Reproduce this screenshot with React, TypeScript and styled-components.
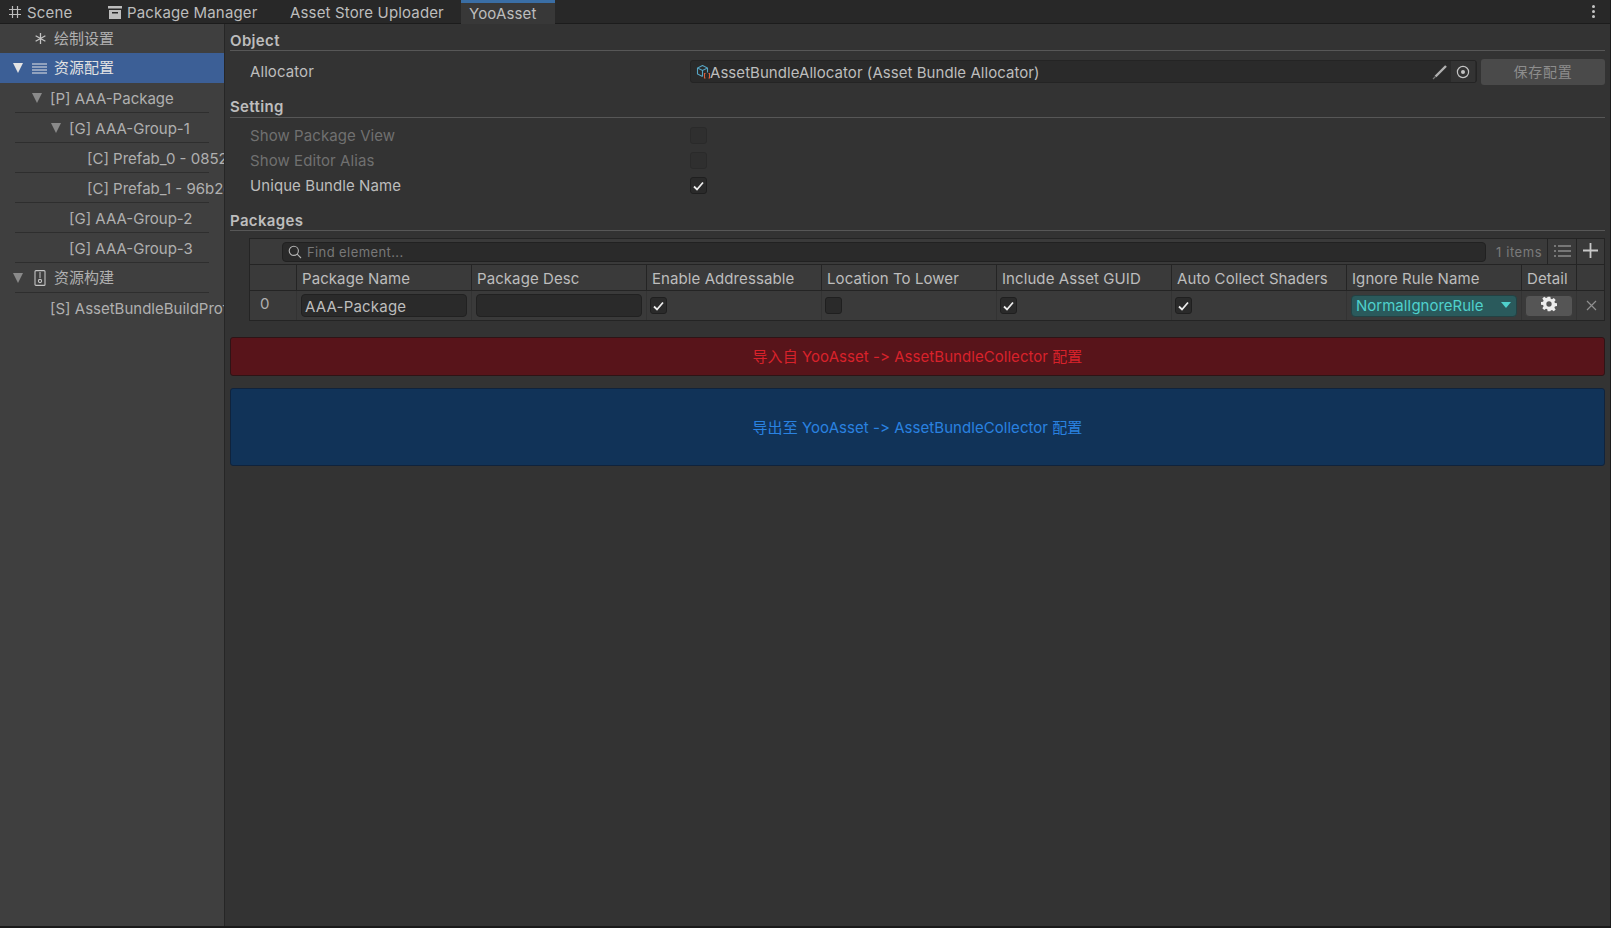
import * as React from 'react';
import styled, { createGlobalStyle } from 'styled-components';

const Global = createGlobalStyle`
  html, body { margin: 0; padding: 0; background: #333333; }
  body { font-family: Inter, "Noto Sans CJK SC", sans-serif; font-size: 15px; color: #bdbdbd; }
  * { box-sizing: border-box; }
`;

const Window = styled.div`
  width: 1611px;
  height: 928px;
  display: flex;
  flex-direction: column;
  overflow: hidden;
  border-right: 1px solid #1c1c1c;
  border-bottom: 2px solid #1a1a1a;
`;

const TabBar = styled.div`
  height: 24px;
  flex: none;
  display: flex;
  align-items: stretch;
  background: #282828;
  border-bottom: 1px solid #1c1c1c;
`;

const Tab = styled.div<{ $w: number; $active?: boolean }>`
  width: ${(p) => p.$w}px;
  flex: none;
  display: flex;
  align-items: center;
  gap: 5px;
  padding-left: 8px;
  margin-bottom: -1px;
  font-size: 15px;
  letter-spacing: 0.15px;
  color: #bdbdbd;
  background: ${(p) => (p.$active ? '#383838' : 'transparent')};
  border-top: ${(p) => (p.$active ? '3px solid #3a6ea5' : '0')};
`;

const TabSpacer = styled.div`
  flex: 1;
`;

const MoreDots = styled.div`
  width: 24px;
  padding-top: 5px;
  display: flex;
  flex-direction: column;
  align-items: center;
  gap: 2px;
  margin-right: 5px;
  span {
    width: 3px;
    height: 3px;
    border-radius: 50%;
    background: #c4c4c4;
  }
`;

const Body = styled.div`
  flex: 1;
  display: flex;
  min-height: 0;
`;

const Sidebar = styled.div`
  width: 225px;
  flex: none;
  background: #3f3f3f;
  border-right: 1px solid #262626;
  overflow: hidden;
`;

const TreeRow = styled.div<{ $h?: number; $selected?: boolean; $line?: boolean }>`
  position: relative;
  height: ${(p) => p.$h ?? 30}px;
  display: flex;
  align-items: center;
  white-space: nowrap;
  overflow: hidden;
  font-size: 15px;
  letter-spacing: 0;
  color: ${(p) => (p.$selected ? '#e2e2e2' : '#b0b0b0')};
  background: ${(p) => (p.$selected ? '#3c5f96' : 'transparent')};
  ${(p) =>
    p.$line
      ? `&::after { content: ''; position: absolute; left: 15px; right: 15px; bottom: 0; height: 1px; background: #2e2e2e; }`
      : ''}
`;

const Arrow = styled.span<{ $x: number; $light?: boolean }>`
  flex: none;
  margin-left: ${(p) => p.$x}px;
  width: 0;
  height: 0;
  margin-top: -1px;
  border-left: 5px solid transparent;
  border-right: 5px solid transparent;
  border-top: 10px solid ${(p) => (p.$light ? '#e4e4e4' : '#8a8a8a')};
`;

const TreeIcon = styled.span<{ $x: number }>`
  flex: none;
  margin-left: ${(p) => p.$x}px;
  width: 15px;
  height: 16px;
  display: flex;
  align-items: center;
  justify-content: center;
`;

const TreeLabel = styled.span<{ $x: number; $cjk?: boolean }>`
  margin-left: ${(p) => p.$x}px;
  margin-top: ${(p) => (p.$cjk ? -3 : 0)}px;
`;

const Main = styled.div`
  flex: 1;
  min-width: 0;
  background: #333333;
  padding: 0 5px 0 5px;
`;

const SectionTitle = styled.div<{ $h: number; $lift?: number }>`
  height: ${(p) => p.$h}px;
  display: flex;
  align-items: flex-end;
  padding-bottom: ${(p) => p.$lift ?? 0}px;
  font-size: 15px;
  font-weight: 600;
  letter-spacing: 0.35px;
  line-height: 18px;
  color: #bdbdbd;
  border-bottom: 1px solid #575757;
`;

const AllocatorRow = styled.div`
  height: 40px;
  padding-top: 8px;
  display: flex;
  align-items: flex-start;
`;

const RowLabel = styled.div<{ $dim?: boolean; $nudge?: boolean }>`
  width: 460px;
  flex: none;
  padding-left: 20px;
  padding-top: ${(p) => (p.$nudge ? 1 : 0)}px;
  color: ${(p) => (p.$dim ? '#707070' : '#bdbdbd')};
  font-size: 15px;
  letter-spacing: 0.08px;
  line-height: 24px;
`;

const ObjectField = styled.div`
  flex: 1;
  margin-top: 1px;
  height: 23px;
  display: flex;
  align-items: center;
  padding-left: 5px;
  background: #2a2a2a;
  border: 1px solid #242424;
  border-radius: 3px;
  font-size: 15px;
  letter-spacing: 0.05px;
  color: #bdbdbd;
`;

const FieldText = styled.span`
  padding-top: 1px;
  margin-left: -1px;
`;

const FieldSpacer = styled.div`
  flex: 1;
`;

const PenIcon = styled.span`
  display: flex;
  margin-right: 3px;
`;

const PickerButton = styled.span`
  width: 24px;
  height: 21px;
  display: flex;
  align-items: center;
  justify-content: center;
  background: #333333;
  margin-right: 1px;
`;

const SaveButton = styled.div`
  width: 124px;
  height: 26px;
  margin-left: 4px;
  padding-bottom: 2px;
  display: flex;
  align-items: center;
  justify-content: center;
  background: #4a4a4a;
  border-radius: 3px;
  color: #8d8d8d;
  font-size: 14px;
  letter-spacing: 0.8px;
`;

const ToggleRow = styled.div<{ $top?: number }>`
  height: 25px;
  margin-top: ${(p) => p.$top ?? 0}px;
  display: flex;
  align-items: center;
`;

const Check = styled.span<{ $dim?: boolean }>`
  width: 17px;
  height: 17px;
  flex: none;
  display: flex;
  align-items: center;
  justify-content: center;
  border-radius: 3px;
  background: ${(p) => (p.$dim ? '#2f2f2f' : '#2a2a2a')};
  border: 1px solid ${(p) => (p.$dim ? '#2a2a2a' : '#1f1f1f')};
`;

const ListBox = styled.div`
  margin: 7px 0 0 19px;
  border-left: 1px solid #242424;
  border-top: 1px solid #242424;
  border-right: 1px solid #242424;
`;

const ListToolbar = styled.div`
  height: 26px;
  display: flex;
  align-items: stretch;
  background: #3a3a3a;
  border-bottom: 1px solid #242424;
`;

const SearchBox = styled.div`
  width: 1204px;
  height: 20px;
  margin: 3px 0 0 32px;
  display: flex;
  align-items: center;
  gap: 5px;
  padding-left: 5px;
  background: #2a2a2a;
  border: 1px solid #212121;
  border-radius: 4px;
  font-size: 13px;
  letter-spacing: 0.4px;
  color: #787878;
`;

const ItemCount = styled.div`
  width: 61px;
  flex: none;
  padding: 1px 0 0 10px;
  display: flex;
  align-items: center;
  font-size: 13px;
  letter-spacing: 0.6px;
  color: #7a7a7a;
  white-space: nowrap;
`;

const ToolButton = styled.div<{ $w: number }>`
  width: ${(p) => p.$w}px;
  flex: none;
  display: flex;
  align-items: center;
  justify-content: center;
  margin-bottom: -1px;
  padding-bottom: 2px;
  border-left: 1px solid #242424;
  border-bottom: 1px solid transparent;
`;

const GridRow = styled.div<{ $h: number }>`
  height: ${(p) => p.$h}px;
  display: grid;
  grid-template-columns: 47px repeat(7, 175px) 55px 1fr;
  background: #3a3a3a;
  border-bottom: 1px solid #242424;
`;

const HeadCell = styled.div`
  display: flex;
  align-items: center;
  padding: 2px 0 0 5px;
  font-size: 15px;
  letter-spacing: 0.08px;
  color: #bdbdbd;
  white-space: nowrap;
  border-right: 1px solid #242424;
`;

const Cell = styled.div<{ $pad?: number }>`
  display: flex;
  align-items: center;
  padding: 0 ${(p) => p.$pad ?? 4}px;
  border-right: 1px solid #333333;
`;

const IndexCell = styled(Cell)`
  padding: 0 0 4px 10px;
  font-size: 15px;
  color: #b0b0b0;
`;

const TextInput = styled.div`
  width: 100%;
  height: 23px;
  padding: 2px 0 0 3px;
  display: flex;
  align-items: center;
  background: #2a2a2a;
  border: 1px solid #212121;
  border-radius: 4px;
  font-size: 15px;
  letter-spacing: 0.2px;
  color: #bdbdbd;
`;

const RuleSelect = styled.div`
  width: 100%;
  height: 22px;
  padding: 0 5px 1px 4px;
  display: flex;
  align-items: center;
  justify-content: space-between;
  background: #2a5a5c;
  border: 1px solid #234143;
  border-radius: 4px;
  font-size: 15px;
  color: #4fd1cc;
`;

const SelectArrow = styled.span`
  width: 0;
  height: 0;
  border-left: 5px solid transparent;
  border-right: 5px solid transparent;
  border-top: 6px solid #4fd1cc;
`;

const GearButton = styled.div`
  width: 100%;
  height: 22px;
  padding-bottom: 3px;
  display: flex;
  align-items: center;
  justify-content: center;
  background: #555555;
  border: 1px solid #3a3a3a;
  border-radius: 4px;
`;

const RemoveCell = styled.div`
  display: flex;
  align-items: center;
  justify-content: center;
  padding-left: 2px;
`;

const ActionButton = styled.div<{ $h: number; $top: number; $bg: string; $fg: string; $edge: string }>`
  height: ${(p) => p.$h}px;
  margin-top: ${(p) => p.$top}px;
  padding-bottom: 2px;
  display: flex;
  align-items: center;
  justify-content: center;
  background: ${(p) => p.$bg};
  color: ${(p) => p.$fg};
  border: 1px solid ${(p) => p.$edge};
  border-radius: 3px;
  font-size: 15px;
  letter-spacing: 0.05px;
`;

const CheckMark = () => (
  <svg width="11" height="10" viewBox="0 0 11 10">
    <path d="M1 5.5 L4 8.5 L10 1.5" fill="none" stroke="#ececec" strokeWidth="1.8" />
  </svg>
);

const columns = [
  'Package Name',
  'Package Desc',
  'Enable Addressable',
  'Location To Lower',
  'Include Asset GUID',
  'Auto Collect Shaders',
  'Ignore Rule Name',
  'Detail',
];

export default function App() {
  return (
    <Window>
      <Global />
      <TabBar>
        <Tab $w={100}>
          <svg width="14" height="14" viewBox="0 0 14 14" stroke="#bdbdbd" strokeWidth="1.2" fill="none">
            <path d="M4.5 1v12M9.5 1v12M1 4.5h12M1 9.5h12" />
          </svg>
          Scene
        </Tab>
        <Tab $w={182}>
          <svg width="14" height="13" viewBox="0 0 14 13" fill="#bdbdbd">
            <path d="M0 0h14v2.5H0zM1 4h12v9H1zM4 6v1.5h6V6z" fillRule="evenodd" />
          </svg>
          Package Manager
        </Tab>
        <Tab $w={179}>Asset Store Uploader</Tab>
        <Tab $w={94} $active>YooAsset</Tab>
        <TabSpacer />
        <MoreDots><span /><span /><span /></MoreDots>
      </TabBar>
      <Body>
        <Sidebar>
          <TreeRow $h={29}>
            <TreeIcon $x={33}>
              <svg width="13" height="13" viewBox="0 0 12 12" stroke="#c4c4c4" strokeWidth="1.2" fill="none">
                <path d="M6 1v10M1.5 3.5l9 5M10.5 3.5l-9 5" />
              </svg>
            </TreeIcon>
            <TreeLabel $x={6} $cjk>绘制设置</TreeLabel>
          </TreeRow>
          <TreeRow $selected>
            <Arrow $x={13} $light />
            <TreeIcon $x={9}>
              <svg width="15" height="11" viewBox="0 0 15 11" stroke="#e6e6e6" strokeWidth="1.2">
                <path d="M0 1h15M0 4h15M0 7h15M0 10h15" />
              </svg>
            </TreeIcon>
            <TreeLabel $x={7} $cjk>资源配置</TreeLabel>
          </TreeRow>
          <TreeRow $line>
            <Arrow $x={32} />
            <TreeLabel $x={8}>[P] AAA-Package</TreeLabel>
          </TreeRow>
          <TreeRow $line>
            <Arrow $x={51} />
            <TreeLabel $x={8}>[G] AAA-Group-1</TreeLabel>
          </TreeRow>
          <TreeRow $line><TreeLabel $x={87}>[C] Prefab_0 - 0852f1</TreeLabel></TreeRow>
          <TreeRow $line><TreeLabel $x={87}>[C] Prefab_1 - 96b2c4</TreeLabel></TreeRow>
          <TreeRow $line><TreeLabel $x={69}>[G] AAA-Group-2</TreeLabel></TreeRow>
          <TreeRow $line><TreeLabel $x={69}>[G] AAA-Group-3</TreeLabel></TreeRow>
          <TreeRow $line>
            <Arrow $x={13} />
            <TreeIcon $x={9}>
              <svg width="12" height="16" viewBox="0 0 12 16" stroke="#c4c4c4" strokeWidth="1.1" fill="none">
                <rect x="1" y="0.6" width="10" height="14.8" rx="1" />
                <path d="M5 3h2M5 5h2M5 7h2" />
                <circle cx="6" cy="11" r="1.6" />
              </svg>
            </TreeIcon>
            <TreeLabel $x={7} $cjk>资源构建</TreeLabel>
          </TreeRow>
          <TreeRow><TreeLabel $x={50}>[S] AssetBundleBuildProfile</TreeLabel></TreeRow>
        </Sidebar>
        <Main>
          <SectionTitle $h={27}>Object</SectionTitle>
          <AllocatorRow>
            <RowLabel $nudge>Allocator</RowLabel>
            <ObjectField>
              <svg width="15" height="15" viewBox="0 0 15 15" fill="none">
                <path d="M6.5 1.5l5 2.5v4.5M6.5 1.5l-5 2.5v6l5 2.5M1.5 4l5 2.5 5-2.5M6.5 6.5v6" stroke="#56a5c4" strokeWidth="1.1" />
                <path d="M9.5 9.5h-1v4.5h1M12.5 9.5h1v4.5h-1" stroke="#d9603a" strokeWidth="1.1" />
              </svg>
              <FieldText>AssetBundleAllocator (Asset Bundle Allocator)</FieldText>
              <FieldSpacer />
              <PenIcon>
                <svg width="16" height="16" viewBox="0 0 16 16" fill="none">
                  <path d="M3.5 12.5 L14 2" stroke="#b0b0b0" strokeWidth="2.4" />
                  <path d="M1 15 L3.5 12.5" stroke="#777" strokeWidth="1.2" />
                </svg>
              </PenIcon>
              <PickerButton>
                <svg width="14" height="14" viewBox="0 0 14 14" fill="none">
                  <circle cx="7" cy="7" r="5.6" stroke="#c4c4c4" strokeWidth="1.2" />
                  <circle cx="7" cy="7" r="2" fill="#c4c4c4" />
                </svg>
              </PickerButton>
            </ObjectField>
            <SaveButton>保存配置</SaveButton>
          </AllocatorRow>
          <SectionTitle $h={27} $lift={1}>Setting</SectionTitle>
          <ToggleRow $top={5}>
            <RowLabel $dim>Show Package View</RowLabel>
            <Check $dim />
          </ToggleRow>
          <ToggleRow>
            <RowLabel $dim>Show Editor Alias</RowLabel>
            <Check $dim />
          </ToggleRow>
          <ToggleRow>
            <RowLabel>Unique Bundle Name</RowLabel>
            <Check><CheckMark /></Check>
          </ToggleRow>
          <SectionTitle $h={33}>Packages</SectionTitle>
          <ListBox>
            <ListToolbar>
              <SearchBox>
                <svg width="14" height="14" viewBox="0 0 14 14" fill="none" stroke="#b4b4b4" strokeWidth="1.1">
                  <circle cx="5.8" cy="5.8" r="4.6" />
                  <path d="M9.2 9.2 L13 13" />
                </svg>
                Find element...
              </SearchBox>
              <ItemCount>1 items</ItemCount>
              <ToolButton $w={29}>
                <svg width="17" height="12" viewBox="0 0 17 12" stroke="#b4b4b4" strokeWidth="1.2">
                  <path d="M4 1h13M4 6h13M4 11h13M0 1h2M0 6h2M0 11h2" />
                </svg>
              </ToolButton>
              <ToolButton $w={28}>
                <svg width="15" height="15" viewBox="0 0 15 15" stroke="#c8c8c8" strokeWidth="1.8">
                  <path d="M7.5 0v15M0 7.5h15" />
                </svg>
              </ToolButton>
            </ListToolbar>
            <GridRow $h={26}>
              <HeadCell />
              {columns.map((c) => <HeadCell key={c}>{c}</HeadCell>)}
              <div />
            </GridRow>
            <GridRow $h={30}>
              <IndexCell>0</IndexCell>
              <Cell><TextInput>AAA-Package</TextInput></Cell>
              <Cell><TextInput /></Cell>
              <Cell $pad={3}><Check><CheckMark /></Check></Cell>
              <Cell $pad={3}><Check /></Cell>
              <Cell $pad={3}><Check><CheckMark /></Check></Cell>
              <Cell $pad={3}><Check><CheckMark /></Check></Cell>
              <Cell>
                <RuleSelect>NormalIgnoreRule<SelectArrow /></RuleSelect>
              </Cell>
              <Cell $pad={3}>
                <GearButton>
                  <svg width="16" height="16" viewBox="0 0 24 24" fill="#ececec">
                    <path fillRule="evenodd" d="M10 1h4l.6 3.2 1.9.8 2.7-1.9 2.8 2.8-1.9 2.7.8 1.9 3.1.5v4l-3.1.6-.8 1.9 1.9 2.7-2.8 2.8-2.7-1.9-1.9.8L14 23h-4l-.6-3.1-1.9-.8-2.7 1.9L2 18.2l1.9-2.7-.8-1.9L0 13V9l3.1-.5.8-1.9L2 3.9l2.8-2.8 2.7 1.9 1.9-.8zM12 8a4 4 0 1 0 0 8 4 4 0 0 0 0-8z" />
                  </svg>
                </GearButton>
              </Cell>
              <RemoveCell>
                <svg width="11" height="11" viewBox="0 0 11 11" stroke="#8f8f8f" strokeWidth="1.2">
                  <path d="M1 1l9 9M10 1l-9 9" />
                </svg>
              </RemoveCell>
            </GridRow>
          </ListBox>
          <ActionButton $h={39} $top={16} $bg="#58141a" $fg="#d8222b" $edge="#2e1416">
            导入自 YooAsset -&gt; AssetBundleCollector 配置
          </ActionButton>
          <ActionButton $h={78} $top={12} $bg="#113358" $fg="#2a82e0" $edge="#10233c">
            导出至 YooAsset -&gt; AssetBundleCollector 配置
          </ActionButton>
        </Main>
      </Body>
    </Window>
  );
}
